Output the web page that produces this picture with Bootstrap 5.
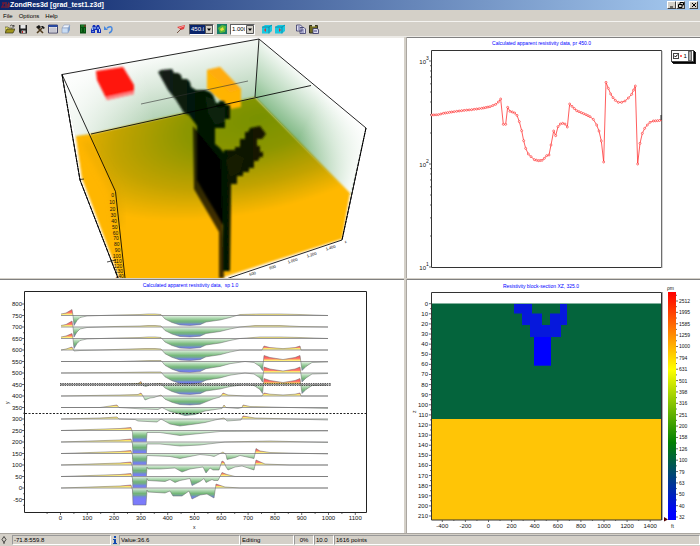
<!DOCTYPE html>
<html lang="en">
<head>
<meta charset="utf-8">
<meta name="viewport" content="width=device-width, initial-scale=1">
<title>ZondRes3d [grad_test1.z3d]</title>
<link href="https://cdn.jsdelivr.net/npm/bootstrap@5.3.0/dist/css/bootstrap.min.css" rel="stylesheet">
<style>
body{font-family:"Liberation Sans",Arial,sans-serif;font-size:6px;line-height:8px;background:#d4d0c8;color:#000}
.titlebar{height:10px;background:linear-gradient(90deg,#0a246a,#a6caf0);color:#fff;font-weight:bold;font-size:7px;line-height:10px;padding:0 2px 0 1px}
.winbtn{width:9px;height:8px;padding:0;border:1px solid;border-color:#fff #404040 #404040 #fff;background:#d4d0c8;display:flex;justify-content:center}
.winbtn svg{width:6px;height:6px}
.menubar{height:12px;padding:0 3px;gap:6px;border-bottom:1px solid #f4f3f0}
.menubar a{color:#000;text-decoration:none}
.toolbar{height:15px;gap:3px;padding:0 5px;border-bottom:1px solid #eceae6}
.tool{width:10px;height:10px;padding:0;border:0;background:none;display:flex;flex:none}
.tool svg{width:10px;height:10px}
.tgroup{gap:3px}
.picker-group{padding-left:11px}
.combo{appearance:none;width:25px;height:11px;padding:0 9px 0 1px;border:1px solid;border-color:#606060 #fff #fff #606060;border-radius:0;font-size:6px;line-height:9px;color:#000;
background:#fff url("data:image/svg+xml,%3Csvg xmlns='http://www.w3.org/2000/svg' viewBox='0 0 8 9'%3E%3Cpath fill='%23d4d0c8' stroke='%23555' d='M.5.5h7v8h-7z'/%3E%3Cpath d='M2 3.500h4l-2 2.500z'/%3E%3C/svg%3E") right center/8px 9px no-repeat}
.combo.picked{background-color:#0a246a;color:#fff}
.panes{display:grid;grid-template-columns:404fr 293fr;column-gap:3px;row-gap:1px}
.pane{background:#fff;border-top:1px solid #808080;position:relative;box-shadow:-1px 0 0 #aaa6a0}
.pane>svg{display:block;width:100%;height:auto}
.pane.solid3d{border-top-color:#eceae6}
.legend-box{position:absolute;right:2%;top:5%;height:12px;width:23px;background:#fff;border:1px solid #444;box-shadow:1px 1px 0 #000,2px 2px 0 #222;padding:1px}
.legend-box input{appearance:none;width:6px;height:6px;margin:0;border:1px solid #444;background:#fff url("data:image/svg+xml,%3Csvg xmlns='http://www.w3.org/2000/svg' viewBox='0 0 4 4'%3E%3Cpath fill='none' stroke='%23000' stroke-width='1' d='M.3 1.700 1.500 3 3.700.5'/%3E%3C/svg%3E") center/4px}
.legend-box i{width:2px;height:2px;background:#f66}
.legend-box b{width:4px;height:10px;background:#aaa;border:1px solid #666}
.statusbar{padding:1px 0;border-top:1px solid #aaa6a0}
.cell{height:10px;border:1px solid;border-color:#999 #fff #fff #999;padding:0 1px;white-space:nowrap}
.icocell{width:8px;flex:none}
.icocell svg{width:6px;height:8px}
.w-pos{width:99px}.w-val{width:121px}.w-mode{width:54px}.w-num{width:20px}
svg text{font-family:"Liberation Sans",Arial,sans-serif;font-size:6px;fill:#111}
svg text.heading{font-size:5px;fill:#00f}
svg text.fine{font-size:5px}
svg text.tiny{font-size:4px}
</style>
<script src="https://cdn.jsdelivr.net/npm/bootstrap@5.3.0/dist/js/bootstrap.bundle.min.js"></script>
</head>
<body>
<header class="titlebar d-flex align-items-center">
<svg width="9" height="8" viewBox="0 0 9 8" aria-hidden="true"><path d="M1 2h3M3 2 1 6h3" stroke="#701838" stroke-width="1.500" fill="none"/><path d="M5 1v6M7 2h1v2H6m0 2h2V4" stroke="#a02020" fill="none"/></svg>
<span class="flex-grow-1">ZondRes3d [grad_test1.z3d]</span>
<button class="winbtn" aria-label="Minimize"><svg viewBox="0 0 6 6"><path d="M1 5h3" stroke="#000"/></svg></button>
<button class="winbtn" aria-label="Restore"><svg viewBox="0 0 6 6"><path d="M2 2V.5h3.500V3H4M.5 2.500H4v3H.5z" stroke="#000" fill="none"/></svg></button>
<button class="winbtn ms-1" aria-label="Close"><svg viewBox="0 0 6 6"><path d="m1 1 4 4m0-4L1 5" stroke="#000"/></svg></button>
</header>
<nav class="menubar d-flex align-items-center"><a href="#">File</a><a href="#">Options</a><a href="#">Help</a></nav>
<div class="toolbar d-flex align-items-center" role="toolbar" aria-label="Tools">
<div class="tgroup d-flex">
<button class="tool" aria-label="Open"><svg viewBox="0 0 10 10"><path d="M0 9V3h3l1 1h3v1" fill="#e8e060" stroke="#554" stroke-width=".7"/><path d="m0 9 2-4h8L8 9z" fill="#a0941c" stroke="#332" stroke-width=".7"/><path d="M5 2q2-2 3 0l1-1v2H7" fill="none" stroke="#222" stroke-width=".7"/></svg></button>
<button class="tool" aria-label="Save"><svg viewBox="0 0 10 10"><path d="M1 1h8v8.500H2L1 8z" fill="#222"/><path d="M2.500 1h5v3.500h-5z" fill="#e8e8e8"/><path d="M3.500 6.500h4v2.500h-4z" fill="#ccc"/><path d="M4 7h1v2H4z" fill="#b22"/></svg></button>
</div>
<div class="tgroup d-flex ms-1">
<button class="tool" aria-label="Settings"><svg viewBox="0 0 10 10"><path d="m2 3 6 6M7 4 2 9" stroke="#503c20" stroke-width="1.600"/><path d="M1 3 4 1l2 2-2 2zM6 2h2l2 2-2 1z" fill="#181818"/></svg></button>
<button class="tool" aria-label="Table"><svg viewBox="0 0 10 10"><path d="M.5 1h9v8h-9z" fill="#eee" stroke="#446"/><path d="M.5 1h9v2h-9z" fill="#2848a0"/><path d="M3 3v6m2-6v6m2-6v6M1 5h8M1 7h8" stroke="#aab" stroke-width=".7"/></svg></button>
<button class="tool" aria-label="Model"><svg viewBox="0 0 10 10"><path d="m1 4 2-3h6L7 4z" fill="#eef6ff" stroke="#89b" stroke-width=".6"/><path d="M1 4h6v5H1z" fill="#c8dcf4" stroke="#89b" stroke-width=".6"/><path d="m7 4 2-3v5L7 9z" fill="#7f9fcc"/></svg></button>
</div>
<div class="tgroup d-flex ms-1">
<button class="tool" aria-label="Calculate"><svg viewBox="0 0 10 10"><path d="M2 .5h6v9H2z" fill="#075010"/><path d="M3 2h3M3 5h1m2 0h1M3 7h1m2 0h1" stroke="#2f9c3a"/><path d="M7 1v2" stroke="#b33"/></svg></button>
<button class="tool" aria-label="Invert"><svg viewBox="0 0 10 10"><path d="M2 1h2l1 2 1-2h2l2 5v3H6V6H4v3H0V6z" fill="#1430b8"/><path d="M2 3 1.500 6M4 3v2m3-2v2m1.500 0v3M2 7v1" stroke="#bce0ff"/></svg></button>
<button class="tool" aria-label="Undo"><svg viewBox="0 0 10 10"><path d="M3 4q5-3 5 1 0 3-3 4" fill="none" stroke="#4788df" stroke-width="1.500"/><path d="M0 2v4h4z" fill="#4788df"/></svg></button>
</div>
<div class="tgroup picker-group d-flex align-items-center ms-5">
<button class="tool" aria-label="Pin"><svg viewBox="0 0 10 10"><path d="M1 3 5 2l4-1-1 4-3 1z" fill="#e04040"/><path d="m5 5-4 4" stroke="#754" stroke-width="1"/><path d="m3 4 5-2" stroke="#f99"/></svg></button>
<select class="combo picked" aria-label="Profile"><option>450.0</option></select>
<button class="tool" aria-label="Map"><svg viewBox="0 0 10 10"><path d="M0 0h10v10H0z" fill="#167c68"/><path d="m1 4 4-3 4 1-1 6-5 1z" fill="#58b838"/><path d="m3 5 3-2 1 3-3 1z" fill="#e8e040"/></svg></button>
<select class="combo" aria-label="Scale"><option>1.000</option></select>
</div>
<div class="tgroup d-flex ms-1">
<button class="tool" aria-label="Previous section"><svg viewBox="0 0 10 10"><path d="m0 3 3-2h7v6L7 9.500H0z" fill="#18c8e0"/><path d="M0 3h7v6.500M7 3l3-2" fill="none" stroke="#087898" stroke-width=".7"/><path d="m2 6 2-2v4z" fill="#d33"/></svg></button>
<button class="tool" aria-label="Next section"><svg viewBox="0 0 10 10"><path d="m0 3 3-2h7v6L7 9.500H0z" fill="#18c8e0"/><path d="M0 3h7v6.500M7 3l3-2" fill="none" stroke="#087898" stroke-width=".7"/><path d="m6 6-2-2v4z" fill="#d33"/></svg></button>
</div>
<div class="tgroup d-flex ms-2">
<button class="tool" aria-label="Copy"><svg viewBox="0 0 10 10"><path d="M.5 1h4l1.500 1.500V7H.5zM4 3.500h4L9.500 5v4.500H4z" fill="#dde" stroke="#336" stroke-width=".8"/><path d="M2 3h2M2 5h1m2 1h3M5 8h3" stroke="#448" stroke-width=".7"/></svg></button>
<button class="tool" aria-label="Paste"><svg viewBox="0 0 10 10"><path d="M.5 1.500h8V9h-8z" fill="#706a20" stroke="#332"/><path d="M3 .5h3v2H3z" fill="#ddc"/><path d="M4 4.500h4l1.500 1V9.500H4z" fill="#dde" stroke="#336" stroke-width=".8"/><path d="M5 7h3" stroke="#448"/></svg></button>
</div>
</div>
<main class="panes">
<section class="pane solid3d"><svg viewBox="0 38 404 240" role="img" aria-label="3D resistivity model">
<defs>
<filter id="soft1" x="-20%" y="-20%" width="140%" height="140%"><feGaussianBlur stdDeviation=".8"/></filter>
<filter id="soft4" x="-20%" y="-20%" width="140%" height="140%"><feGaussianBlur stdDeviation="4"/></filter>
<radialGradient id="slab" gradientUnits="userSpaceOnUse" cx="0" cy="0" r="1" gradientTransform="translate(258 118) rotate(-14) scale(210 92)"><stop offset="0" stop-color="#789100"/><stop offset=".35" stop-color="#8b9600"/><stop offset=".7" stop-color="#c2a300"/><stop offset="1" stop-color="#ffb800"/></radialGradient>
<linearGradient id="hazeL" gradientUnits="userSpaceOnUse" x1="150" y1="52" x2="168" y2="128"><stop offset="0" stop-color="#fff"/><stop offset=".45" stop-color="#dbe9dc"/><stop offset="1" stop-color="#a5caa8"/></linearGradient>
<linearGradient id="hazeR" gradientUnits="userSpaceOnUse" x1="330" y1="95" x2="285" y2="145"><stop offset="0" stop-color="#fff"/><stop offset=".5" stop-color="#b8d8bb"/><stop offset="1" stop-color="#62a868"/></linearGradient>
<linearGradient id="fadeR" gradientUnits="userSpaceOnUse" x1="300" y1="135" x2="362" y2="165"><stop offset="0" stop-color="#fff" stop-opacity="0"/><stop offset="1" stop-color="#fff" stop-opacity=".95"/></linearGradient>
<linearGradient id="fadeL" gradientUnits="userSpaceOnUse" x1="70" y1="110" x2="150" y2="95"><stop offset="0" stop-color="#fff" stop-opacity=".8"/><stop offset="1" stop-color="#fff" stop-opacity="0"/></linearGradient>
<linearGradient id="veinG" x1="0" y1="0" x2="1" y2="0"><stop offset="0" stop-color="#1a211b"/><stop offset=".25" stop-color="#071a0a"/><stop offset=".5" stop-color="#001501"/><stop offset="1" stop-color="#171806"/></linearGradient>
<clipPath id="boxClip"><path d="M62 74 259 39 366 128 342 240 225 279H118L80 180z"/></clipPath>
</defs>
<g clip-path="url(#boxClip)">
<path d="M62 74 259 39 255 97 76 138z" fill="url(#hazeL)"/><path d="M62 74 259 39 255 97 76 138z" fill="url(#fadeL)"/>
<path d="M259 39 366 128 350 195 255 97z" fill="url(#hazeR)"/><path d="M259 39 366 128 350 195 255 97z" fill="url(#fadeR)"/>
<g filter="url(#soft1)"><path d="M76 136 91 134 255 97 350 193 342 239 224 277 218 290H124L82 178z" fill="url(#slab)"/><path d="M76 137 90 135 115 191 125 290 118 272 82 178z" fill="#ffb600"/></g>
</g>
<path d="m86 141 29 50 4 35" fill="none" stroke="#d5a100" stroke-width="3" filter="url(#soft4)"/>
<g filter="url(#soft1)"><path d="m96 71 27-4 11 18v9l-27 6-10-20z" fill="#ff1408"/><path d="m107 100-1-3 28-6v3z" fill="#f88"/>
<path d="m207 70 13-3 21 22v18l-10 2-24-20z" fill="#ffb405"/><path d="m207 70 13-3 21 22-11 3z" fill="#ffac10"/></g>
<g filter="url(#soft1)"><path d="M158 72l3-2 11-1 2 4h4l3 2 1 4h5l3 3 1 5 5 3h9l5 2 3 3 3 8h3v-2h5l2 4h4v14h-5v9h-10v16l5 4 4 5v-3h11v-3h5v-8h5v-7h3l2-4 10-2 6 8-4 5h-5v7h3v6h3v5h-3l-2 4h-4v7h-5v4h-6v4h-6v8h-6l-1 87h-7v-46l-8-14-9-15-9-16v-54l-8-11-5-2-8-13-8-10-5-9z" fill="url(#veinG)"/>
<path d="m193 126 28 34 3 118h-5v-46l-25-43z" fill="#000" opacity=".75"/><path d="m205 96 8 3 5 9 7-1v15l-10 3-7-12z" fill="#0c2b0d" opacity=".7"/><path d="m226 160 10-6 8 4-4 14-10 5z" fill="#1c2204" opacity=".8"/></g>
<g fill="none" stroke="#000" stroke-width="1"><path d="M62 74.500 259 39 366 128 342 240 226 279M62 74.500 80 180 118 278M62 74.500 115.500 191.500 125 278M91 134 311 85.500M259 39 255 97" opacity=".85"/><path d="M62 74.500 80 180 118 278M366 128 342 240" stroke-dasharray="4 1"/><path d="m141 104 107-23" stroke-width=".6" stroke="#333"/><path d="m107 262 9-2M80 179.500l4-.5" stroke-width=".7"/></g>
<g id="depthTicks"></g>
</svg></section>
<section class="pane"><svg viewBox="407 39 293 240" role="img" aria-label="Resistivity curve">
<text class="heading" x="541.500" y="46" text-anchor="middle">Calculated apparent resistivity data, pr 450.0</text>
<path d="M431.500 51.500h230v217h-230z" fill="none" stroke="#333"/><path d="M662 52v217" stroke="#aaa"/>
<g id="curve"></g></svg>
<label class="legend-box d-flex align-items-center justify-content-between"><input type="checkbox" checked><i></i><span>1</span><b></b></label>
</section>
<section class="pane"><svg viewBox="0 280 404 253" role="img" aria-label="Apparent resistivity profiles">
<defs>
<linearGradient id="above" gradientUnits="userSpaceOnUse" x1="0" y1="0" x2="0" y2="-4"><stop offset="0" stop-color="#ffffa0"/><stop offset=".45" stop-color="#ffe060"/><stop offset=".55" stop-color="#ff8870"/><stop offset="1" stop-color="#ff6060"/></linearGradient>
<linearGradient id="below" gradientUnits="userSpaceOnUse" x1="0" y1="0" x2="0" y2="11"><stop offset="0" stop-color="#e8f4e8"/><stop offset=".2" stop-color="#b2dab4"/><stop offset=".5" stop-color="#6fb573"/><stop offset=".66" stop-color="#6ba28c"/><stop offset=".8" stop-color="#6a80dc"/><stop offset="1" stop-color="#7474fa"/></linearGradient>
<clipPath id="upper"><path d="M0-20h404v20H0z"/></clipPath><clipPath id="lower"><path d="M0 0h404v25H0z"/></clipPath>
</defs>
<text class="heading" x="190.500" y="287" text-anchor="middle" xml:space="preserve">Calculated apparent resistivity data,  sp 1.0</text>
<g id="profiles"></g>
<path d="M24.500 291.500h342v221h-342z" fill="none" stroke="#222"/><path d="M25 413.500h341" stroke="#222" stroke-dasharray="2 1.500"/>
<text class="fine" x="193" y="529">x</text><text class="fine" transform="translate(9 404) rotate(-90)">y</text>
</svg></section>
<section class="pane"><svg viewBox="407 280 293 253" role="img" aria-label="Block section">
<defs><linearGradient id="scaleG" x1="0" y1="0" x2="0" y2="1"><stop offset="0" stop-color="red"/><stop offset=".12" stop-color="#ff5800"/><stop offset=".34" stop-color="#ff0"/><stop offset=".66" stop-color="#008000"/><stop offset=".97" stop-color="#00f"/></linearGradient></defs>
<text class="heading" x="541" y="288" text-anchor="middle">Resistivity block-section XZ, 325.0</text>
<path d="M431 303.500h230V419H431z" fill="#04643c"/><path d="M431 419h230v101H431z" fill="#ffc506"/>
<path d="M514 304h18v9.500h10V325h8v-11.500h10V304h7v21h-6v12h-10v28.500h-17V337h-4v-12h-8v-11.500h-8z" fill="#0618dc"/><path d="M534 337h17v28.500h-17z" fill="#00f"/>
<path d="M431.500 292.500h230V520h-230z" fill="none" stroke="#333"/><path d="M662.500 292v228" stroke="#aaa"/>
<path d="M668 292h8v228h-8z" fill="url(#scaleG)"/><path d="m664 517 4 2.500-4 2z" fill="#500"/>
<text class="fine" x="667" y="290">ρm</text><text class="fine" x="671" y="528">ft</text><text class="fine" transform="translate(416 413) rotate(-90)">z</text>
<g id="section"></g></svg></section>
</main>
<footer class="statusbar d-flex align-items-center">
<span class="icocell d-flex justify-content-center"><svg viewBox="0 0 6 8"><path d="m3 .5 2 3-2 3-2-3zM3 6v2" fill="none" stroke="#222" stroke-width=".8"/></svg></span>
<span class="cell w-pos ms-1">-71.8:559.8</span>
<span class="icocell d-flex justify-content-center"><svg viewBox="0 0 6 8"><path d="M2 0h2v2H2zM1 3h3v4h1v1H1V7h1V4H1z" fill="#1048b0"/></svg></span>
<span class="cell w-val">Value:36.6</span><span class="cell w-mode">Editing</span><span class="cell w-num text-center">0%</span><span class="cell w-num">10.0</span><span class="cell flex-grow-1">1616 points</span>
</footer>
<script>
const el = id => document.getElementById(id);
const line = (x1,y1,x2,y2,c='#444') => `<path d="M${x1} ${y1}L${x2} ${y2}" stroke="${c}" stroke-width=".8"/>`;
const label = (x,y,t,a='middle',k='') => `<text x="${x}" y="${y}" text-anchor="${a}" class="${k}">${t}</text>`;

// Edge labels of the 3D box
const depth = [195,202,209,215,221,227,233,238,244,250,256,261,266,271,276];
let out = depth.map((y,i)=>label(114+i*.7, y+2, i*10, 'end', 'fine')).join('');
[['600',253,275],['800',273,268.5],['1,000',293,262],['1,200',312,256],['1,400',331,249],['z',346,243]].forEach(([t,x,y])=>{
  out += `<text class="tiny" text-anchor="middle" transform="translate(${x} ${y}) rotate(-18)">${t}</text>`;});
el('depthTicks').innerHTML = out;

// Curve along the selected profile; units are thirds of a pixel
const pts = [80,240,100,239,115,235,140,231,170,227,200,224,230,220,255,215,272,208,280,201,287,192,295,268,302,268,308,217,315,229,322,231,329,234,336,241,343,260,350,287,356,317,362,340,370,357,378,365,388,374,400,377,411,376,418,370,425,362,432,360,438,330,446,288,452,302,459,275,466,267,473,265,480,267,487,276,494,207,501,214,515,227,529,233,543,239,555,245,565,253,575,270,582,288,589,318,596,381,603,142,610,160,617,177,624,188,631,196,640,202,650,202,660,198,670,189,680,178,691,153,698,387,705,325,712,295,719,280,727,270,735,262,745,258,770,256];
const xy = []; for (let i=0;i<pts.length;i+=2) xy.push([pts[i]/3+405, pts[i+1]/3+36]);
out = `<polyline points="${xy.join(' ')}" fill="none" stroke="#f33" stroke-width=".8"/>`;
xy.forEach((p,i)=>{ const q = xy[i+1] || p, n = Math.max(1, Math.round((q[0]-p[0])/2.3));
  for (let k=0;k<n && p[0]+(q[0]-p[0])*k/n<661;k++) out += `<circle cx="${p[0]+(q[0]-p[0])*k/n}" cy="${p[1]+(q[1]-p[1])*k/n}" r="1" fill="#fff" stroke="#f22" stroke-width=".6"/>`; });
[62,165,268].forEach((y,i)=>{ out += line(429,y,431,y)+label(426,y+3,10,'end')+label(426,y-1,3-i,'start','fine');
  if (i) for (let m=2;m<10;m++) out += line(430,y-103*Math.log10(m),431,y-103*Math.log10(m)); });
out += line(661,116,661,121,'#000');
el('curve').innerHTML = out;

// Profile traces: [x, offset from the baseline] pairs
const slope = d => [161,-1,165,d*.35,172,d*.7,180,d*.95,190,d,200,d*.92,206,d*.65];
const well = d => [...slope(d),213,d*.55,220,d*.45,230,d*.2];
const cap = h => [262,0,264,-h,270,-h*.6,283,-h*.35,295,-h*.6,300,-h,301,0,328,0];
const spike = h => [61,-1.5,66,-2.5,72,-h,73,0,74,10,77,5,80,2,87,.5,115,-.5,140,-1,148,-1.500,155,-1.500];
const block = [245,0,254,1,260,5,262.5,9,264,-6,270,-4,283,-2,295,-4,300,-6,302,9,306,5,312,1,328,.5];
const dyke = [61,0,90,-1,120,-2,131,-3,132.5,2,133,17,146,17,147,2];
const rows = {
750:[...spike(6),...well(10),240,-1,260,-1.500,280,-1.500,300,-1,328,0],700:[...spike(6),...well(10),240,0,255,-1.500,280,-1.500,300,-.5,328,0],
650:[...spike(5),...well(10),240,0,260,-1.500,280,-1.500,300,-1,328,0],600:[61,0,66,-1,72,-3,74,1,80,.5,100,0,145,-1.500,155,-1.500,...well(10.5),240,0,...cap(4)],
550:[61,0,120,0,150,-1,...well(11),...block],500:[61,0,120,-.5,150,-1,...well(11),...block],
450:[61,0,120,0,138,-1,141,-3,143,1,146,2,150,0,...well(10),...block],
400:[61,0,120,-1,138,-1.500,141,-3,143,0,145,4,150,2,154,1.5,...slope(9),213,3,220,1,223,-3,228,-1,245,0,...cap(3)],
350:[61,0,100,0,117,-2.5,119,0,143,1.5,158,2,162,0,170,4,185,8,195,7,205,3.5,215,2,222,1,224,-2.5,226,0,238,1,242,0,243,-2.5,250,-1,328,1],
300:[61,0,100,-1,117,-2,119,0,135,.5,138,2,157,3,161,0,170,5,180,7,195,5,205,3.5,215,1,224,-1,227,2,241,1,243,-3,255,-1,328,1],
250:[...dyke,160,2,180,5,200,3,220,1,328,.5],200:[...dyke,160,2,180,4,200,3,225,0,270,-1,328,.5],
150:[...dyke,170,3,180,5,190,3,200,1,210,2,214,3,218,1,223,-1.5,226,1,227,6,235,4,240,2,254,5,256,-5,260,-2.5,270,-1,328,.5],
100:[...dyke,148,4,160,4,175,3,182,7,190,4,203,2,206,8,210,3,213,5,219,5,222,-4,224,-3,226,2,228,5,235,2,242,1,254,5,256,-5,265,-1,290,0,328,0],
50:[...dyke,148,4,165,5,170,3,175,6,180,4,190,2,192,9,200,5,204,2,206,6,212,3,214,4,218,4,222,-4,227,-2,235,0,328,0],
0:[...dyke,148,4,165,5,170,3,173,8,182,8,189,3,192,11,200,7,207,6,214,10,216,-4,225,-1,240,0,328,0]};
out = '';
for (let v=750; v>=0; v-=50) { const a=rows[v], p=[]; for (let i=0;i<a.length;i+=2) p.push(a[i]+','+a[i+1]);
  const d=`M61 0L${p.join('L')}L328 0z`;
  out += `<g transform="translate(0 ${488-v*.23})"><path d="${d}" clip-path="url(#upper)" fill="url(#above)"/><path d="${d}" clip-path="url(#lower)" fill="url(#below)" fill-opacity=".95"/><path d="M61 0H328" stroke="#999" stroke-width="1"/><polyline points="${p.join(' ')}" fill="none" stroke="#666" stroke-width=".5"/></g>`; }
out += '<path d="M60 384.500h271" stroke="#222" stroke-width="2.500" stroke-dasharray="1.500 .8"/><path d="M60 384.500h271" stroke="#ddd" stroke-width=".7" stroke-dasharray="1.500 .8"/>';
for (let v=800; v>=-50; v-=50) out += line(22,488-v*.23,24,488-v*.23)+line(23,493.75-v*.23,24,493.75-v*.23)+label(22,490-v*.23,v,'end');
for (let v=-50; v<=1100; v+=50) { const x=60.5+v*.268; out += line(x,513,x,v%100?514:515); if (v>=0 && v%100==0) out += label(x,520,v); }
el('profiles').innerHTML = out;

// Section axes and colour scale
out = '';
for (let v=0; v<=210; v+=10) { const y=303.7+v*1.011; out += line(429,y,431,y)+(v<210?line(430,y+5,431,y+5):'')+label(428,y+2,v,'end'); }
for (let v=-400; v<=1400; v+=100) { const x=488.5+v*.1155; out += line(x,520,x,v%200?521:522); if (v%200==0) out += label(x,528,v); }
[2512,1995,1585,1259,1000,794,631,501,398,316,251,200,158,126,100,79,63,50,40,32].forEach((t,i)=>{ const y=301+i*11.37; out += line(676,y,678,y)+line(676,y-5.7,677,y-5.7)+label(679,y+2,t,'start','fine'); });
el('section').innerHTML = out;
</script>
</body>
</html>
